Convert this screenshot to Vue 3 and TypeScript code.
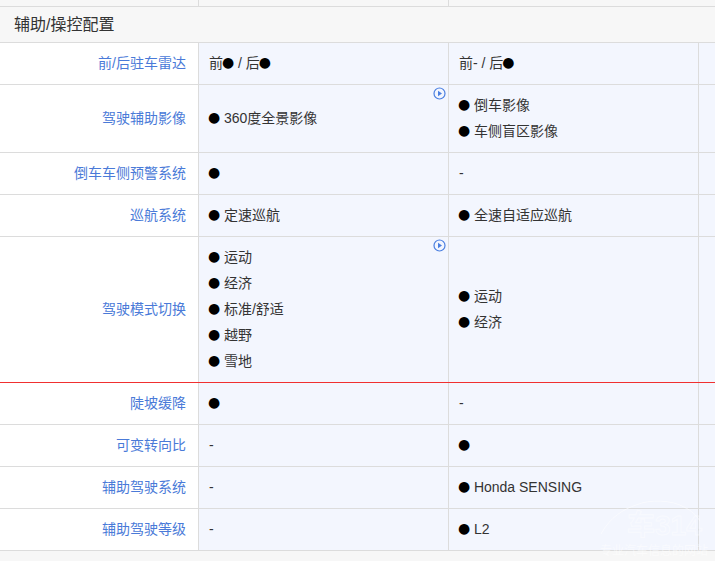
<script setup lang="ts">
interface Cell { lines: string[]; play?: boolean }
interface Row { label: string; cells: Cell[]; red?: boolean; tall?: string }
const rows: Row[] = [
  { label: '前/后驻车雷达', cells: [{ lines: ['前● / 后●'] }, { lines: ['前- / 后●'] }] },
  { label: '驾驶辅助影像', cells: [{ lines: ['● 360度全景影像'], play: true }, { lines: ['● 倒车影像', '● 车侧盲区影像'] }], tall: 'h68' },
  { label: '倒车车侧预警系统', cells: [{ lines: ['●'] }, { lines: ['-'] }] },
  { label: '巡航系统', cells: [{ lines: ['● 定速巡航'] }, { lines: ['● 全速自适应巡航'] }] },
  { label: '驾驶模式切换', cells: [{ lines: ['● 运动', '● 经济', '● 标准/舒适', '● 越野', '● 雪地'], play: true }, { lines: ['● 运动', '● 经济'] }], tall: 'h146', red: true },
  { label: '陡坡缓降', cells: [{ lines: ['●'] }, { lines: ['-'] }] },
  { label: '可变转向比', cells: [{ lines: ['-'] }, { lines: ['●'] }] },
  { label: '辅助驾驶系统', cells: [{ lines: ['-'] }, { lines: ['● Honda SENSING'] }] },
  { label: '辅助驾驶等级', cells: [{ lines: ['-'] }, { lines: ['● L2'] }] },
]
const parts = (line: string): string[] => line.split(/(●)/).filter(Boolean)
</script>

<template>
  <div class="page">
    <div class="top"><span class="tc"></span><span class="tc"></span><span></span></div>
    <div class="section">辅助/操控配置</div>
    <div v-for="r in rows" :key="r.label" class="row" :class="[r.tall, { red: r.red }]">
      <div class="label">{{ r.label }}</div>
      <div v-for="(c, i) in r.cells" :key="i" class="cell">
        <svg v-if="c.play" class="play" width="13" height="13" viewBox="0 0 13 13">
          <circle cx="6.5" cy="6.5" r="5.5" fill="none" stroke="#4a7fe0" stroke-width="1.2" />
          <path d="M5 3.8 9 6.5 5 9.2Z" fill="#4a7fe0" />
        </svg>
        <div v-for="l in c.lines" :key="l" class="line"><template v-for="(p, k) in parts(l)" :key="k"><span v-if="p === '●'" class="dot">●</span><template v-else>{{ p }}</template></template></div>
      </div>
      <div class="rest"></div>
    </div>
    <div class="wm">
      <svg width="115" height="64" viewBox="0 0 115 64">
        <path d="M1 37C10 20 24 12 36 8 50 2 72 3 84 10c8 4 12 8 16 14" fill="none" stroke="#fff" stroke-width="1" />
      </svg>
      <span class="wm-big">车314</span>
      <span class="wm-small">专业汽车信息的网站</span>
    </div>
  </div>
</template>

<style>
html, body { margin: 0; background: #f7f7f7; }
</style>

<style scoped>
.page {
  position: relative;
  width: 715px;
  height: 561px;
  overflow: hidden;
  background: #f7f7f7;
  font-family: "Liberation Sans", "Noto Sans CJK SC", sans-serif;
  font-size: 14px;
  color: #333;
}
.top {
  display: grid;
  grid-template-columns: 199px 250px 250px 1fr;
  height: 7px;
  box-sizing: border-box;
  border-bottom: 1px solid #dcdcdc;
}
.tc { border-right: 1px solid #dcdcdc; }
.section {
  height: 36px;
  box-sizing: border-box;
  padding-left: 14px;
  border-bottom: 1px solid #dcdcdc;
  font-size: 16px;
  line-height: 36px;
}
.row {
  display: grid;
  grid-template-columns: 199px 250px 250px 1fr;
  height: 42px;
  box-sizing: border-box;
  border-bottom: 1px solid #dcdcdc;
}
.row.h68 { height: 68px; }
.row.h146 { height: 146px; }
.row.red { border-bottom-color: #f03030; }
.label {
  display: flex;
  align-items: center;
  justify-content: flex-end;
  padding-right: 12px;
  padding-bottom: 4px;
  background: #fff;
  color: #4a7ad8;
  border-right: 1px solid #dcdcdc;
}
.cell {
  position: relative;
  display: flex;
  flex-direction: column;
  justify-content: center;
  padding-left: 10px;
  padding-bottom: 2px;
  background: #f3f6fe;
  border-right: 1px solid #dcdcdc;
}
.line { line-height: 26px; height: 26px; white-space: pre; }
.dot {
  display: inline-block;
  width: 12px;
  margin-left: -1px;
  line-height: 14px;
  font-family: "DejaVu Sans", sans-serif;
  color: #000;
  vertical-align: 1px;
}
.play { position: absolute; top: 2px; right: 2px; }
.rest { background: #f3f6fe; }
.wm {
  position: absolute;
  right: 0;
  bottom: 0;
  width: 115px;
  height: 64px;
  color: transparent;
  pointer-events: none;
}
.wm svg { position: absolute; inset: 0; opacity: 0.6; }
.wm-big {
  position: absolute;
  left: 27px;
  top: 13px;
  font-size: 28px;
  line-height: 32px;
  font-weight: 700;
  white-space: nowrap;
  -webkit-text-stroke: 1px rgba(255, 255, 255, 0.45);
}
.wm-small {
  position: absolute;
  left: 0;
  top: 47px;
  font-size: 12px;
  line-height: 14px;
  white-space: nowrap;
  color: rgba(255, 255, 255, 0.5);
}
</style>
